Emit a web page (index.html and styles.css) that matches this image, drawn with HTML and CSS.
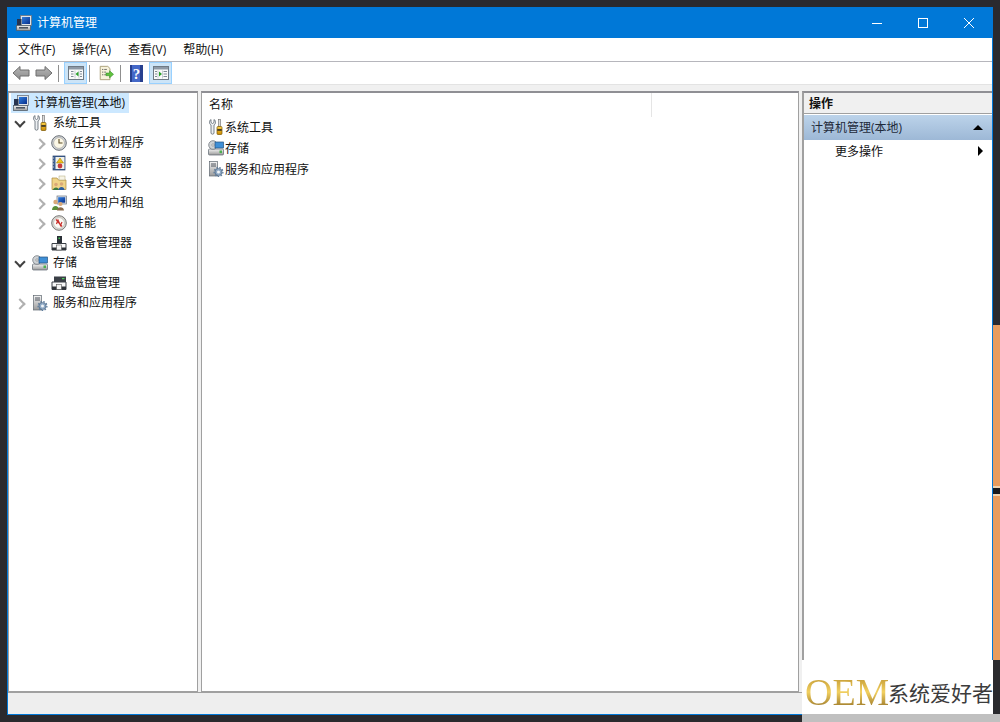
FILE: index.html
```html
<!DOCTYPE html>
<html lang="zh-CN">
<head>
<meta charset="utf-8">
<title>计算机管理</title>
<link rel="stylesheet" href="styles.css">
</head>
<body>
<svg class="defs" width="0" height="0" aria-hidden="true">
  <defs>
    <linearGradient id="screen" x1="0" y1="0" x2="1" y2="1"><stop offset="0" stop-color="#2f7fe0"/><stop offset="1" stop-color="#0a2f8a"/></linearGradient>
    <linearGradient id="metal" x1="0" y1="0" x2="0" y2="1"><stop offset="0" stop-color="#f4f4f4"/><stop offset="1" stop-color="#9a9a9a"/></linearGradient>
    <linearGradient id="gold" x1="0" y1="0" x2="0" y2="1"><stop offset="0" stop-color="#ffd34a"/><stop offset="1" stop-color="#c98a00"/></linearGradient>
    <linearGradient id="arrow" x1="0" y1="0" x2="0" y2="1"><stop offset="0" stop-color="#b5b5b5"/><stop offset="1" stop-color="#8e8e8e"/></linearGradient>
    <symbol id="i-computer" viewBox="0 0 16 16">
      <rect x="4.5" y="0.5" width="11" height="10" fill="#dfe4ea" stroke="#6d7580" stroke-width=".8"/>
      <rect x="6" y="2" width="8" height="7" fill="url(#screen)"/>
      <rect x="1" y="4" width="4.5" height="8" fill="#27344f"/>
      <rect x="0.5" y="10.5" width="14" height="5" fill="url(#metal)" stroke="#55606b" stroke-width=".8"/>
      <rect x="3" y="12" width="9" height="1.6" fill="#4a5460"/>
    </symbol>
    <symbol id="i-tools" viewBox="0 0 16 16">
      <path d="M3 0.5 C1 1.5 1 5 3 6 L3 14 C3 15.6 6 15.6 6 14 L6 6 C8 5 8 1.5 6 0.5 L6 3.5 L4.5 4.5 L3 3.5 Z" fill="#eceff2" stroke="#5c6670" stroke-width=".8"/>
      <rect x="10.5" y="0.5" width="2" height="7" fill="#dcdcdc" stroke="#6a6a6a" stroke-width=".6"/>
      <rect x="9" y="7.5" width="5" height="8" rx="1" fill="url(#gold)" stroke="#7a5600" stroke-width=".7"/>
      <rect x="9.3" y="10.2" width="4.4" height="1.5" fill="#222"/>
    </symbol>
    <symbol id="i-clock" viewBox="0 0 16 16">
      <circle cx="8" cy="8" r="7.3" fill="#d2d5d8" stroke="#6b7075"/>
      <circle cx="8" cy="8" r="5.4" fill="#fbf7e6" stroke="#9a9a9a" stroke-width=".6"/>
      <path d="M8 4 V8 H11.5" fill="none" stroke="#5b4a20" stroke-width="1.1"/>
    </symbol>
    <symbol id="i-event" viewBox="0 0 16 16">
      <rect x="2" y="1" width="12" height="14" fill="#3d5f93" stroke="#27406a" stroke-width=".7"/>
      <rect x="4.5" y="2" width="9" height="12" fill="#f1f1ea"/>
      <path d="M9 3 L12.5 8 H5.5 Z" fill="#f3c41a" stroke="#8a6c00" stroke-width=".5"/>
      <circle cx="9" cy="11" r="2.4" fill="#c83c3c"/>
      <path d="M1.5 3 H3 M1.5 6 H3 M1.5 9 H3 M1.5 12 H3" stroke="#ddd" stroke-width=".9"/>
    </symbol>
    <symbol id="i-share" viewBox="0 0 16 16">
      <path d="M1 3 H6 L7.5 5 H15 V14.5 H1 Z" fill="#f0d488" stroke="#a9893f" stroke-width=".7"/>
      <rect x="8" y="1" width="6" height="4" fill="#f7f4e6" stroke="#b0a77a" stroke-width=".5"/>
      <circle cx="5" cy="9.5" r="1.8" fill="#d9a878"/><path d="M2 15 C2 11.5 8 11.5 8 15 Z" fill="#3d7a3d"/>
      <circle cx="10.5" cy="9" r="1.8" fill="#d9a878"/><path d="M7.5 15 C7.5 11 13.5 11 13.5 15 Z" fill="#2d5f9e"/>
    </symbol>
    <symbol id="i-users" viewBox="0 0 16 16">
      <rect x="6" y="1" width="9.5" height="8" fill="#dfe4ea" stroke="#6d7580" stroke-width=".7"/>
      <rect x="7.2" y="2.2" width="7" height="5.5" fill="url(#screen)"/>
      <circle cx="4.5" cy="7" r="2.2" fill="#d9a878"/><path d="M1 15 C1 9.5 8 9.5 8 15 Z" fill="#5b8f3a"/>
      <circle cx="9.5" cy="9" r="2.1" fill="#d9a878"/><path d="M6 15.5 C6 11 13 11 13 15.5 Z" fill="#8a6a4a"/>
    </symbol>
    <symbol id="i-perf" viewBox="0 0 16 16">
      <circle cx="8" cy="8" r="7.3" fill="#dcdad2" stroke="#777"/>
      <circle cx="8" cy="8" r="5.4" fill="#fbfbf6" stroke="#a5a5a5" stroke-width=".5"/>
      <path d="M5 4.5 L11 11.5 M5.5 9 L7 5 L9.5 10.5 L11 7" fill="none" stroke="#c9302c" stroke-width="1.2"/>
    </symbol>
    <symbol id="i-device" viewBox="0 0 16 16">
      <rect x="6" y="1" width="5" height="7" fill="#2a2f36"/>
      <rect x="7.5" y="2.5" width="1.4" height="1.6" fill="#4bd05a"/>
      <path d="M1 8.5 H15 V15 H1 Z" fill="#fbfbfb" stroke="#3a3f46"/>
      <rect x="1" y="12.5" width="14" height="2.5" fill="#2e3339"/>
      <rect x="5.5" y="10" width="5" height="5" fill="#f5f5f5" stroke="#555" stroke-width=".6"/>
    </symbol>
    <symbol id="i-storage" viewBox="0 0 16 16">
      <rect x="0.5" y="9" width="15" height="6" rx="1" fill="url(#metal)" stroke="#5c6670" stroke-width=".7"/>
      <rect x="11.5" y="10.5" width="2.5" height="2.6" fill="#4bb04f"/>
      <circle cx="5" cy="5" r="4.3" fill="#cfd3d6" stroke="#666c72" stroke-width=".7"/>
      <circle cx="5" cy="5" r="1.2" fill="#f5f5f5" stroke="#666" stroke-width=".5"/>
      <rect x="7" y="2" width="8.5" height="6" fill="#3f8fd6" stroke="#25527f" stroke-width=".7"/>
    </symbol>
    <symbol id="i-disk" viewBox="0 0 16 16">
      <rect x="3" y="1.5" width="12" height="6" fill="#3a3f46"/>
      <rect x="11" y="3" width="2.5" height="1.2" fill="#4bd05a"/>
      <path d="M1 7 H15 V14.5 H1 Z" fill="#f8f8f8" stroke="#3a3f46"/>
      <rect x="1" y="11.5" width="14" height="3" fill="#2e3339"/>
      <rect x="5.5" y="9.5" width="5" height="5" fill="#f5f5f5" stroke="#555" stroke-width=".6"/>
    </symbol>
    <symbol id="i-services" viewBox="0 0 16 16">
      <rect x="1.5" y="0.5" width="8" height="14.5" fill="url(#metal)" stroke="#5f6770" stroke-width=".7"/>
      <path d="M3 3 H8 M3 5 H8" stroke="#3f4650" stroke-width=".9"/>
      <circle cx="10.5" cy="11" r="3.6" fill="#8fa9c4" stroke="#3d5673" stroke-width=".6"/>
      <circle cx="10.5" cy="11" r="4.4" fill="none" stroke="#5f7d9c" stroke-width="1.3" stroke-dasharray="1.6 1.4"/>
      <circle cx="10.5" cy="11" r="1.5" fill="#f1f4f7"/>
    </symbol>
    <symbol id="i-back" viewBox="0 0 18 16">
      <path d="M1 8 L8 1.5 V5 H17 V11 H8 V14.5 Z" fill="url(#arrow)" stroke="#6f6f6f"/>
    </symbol>
    <symbol id="i-forward" viewBox="0 0 18 16">
      <path d="M17 8 L10 1.5 V5 H1 V11 H10 V14.5 Z" fill="url(#arrow)" stroke="#6f6f6f"/>
    </symbol>
    <symbol id="i-pane-left" viewBox="0 0 16 16">
      <rect x="0.5" y="1.5" width="15" height="13" fill="#fafafa" stroke="#6f7a85"/>
      <rect x="1" y="2" width="14" height="2.5" fill="#8e99a6"/>
      <path d="M3 6.5 H5.5 M3 9 H5.5 M3 11.5 H5.5 M12 6.5 H14 M12 9 H14 M12 11.5 H14" stroke="#7f8b96"/>
      <path d="M7 5.5 V13.5 M11 5.5 V13.5" stroke="#b5bcc4" stroke-width=".7"/>
      <path d="M10.5 6.5 V11.5 L7.5 9 Z" fill="#2aa02a"/>
    </symbol>
    <symbol id="i-pane-right" viewBox="0 0 16 16">
      <rect x="0.5" y="1.5" width="15" height="13" fill="#fafafa" stroke="#6f7a85"/>
      <rect x="1" y="2" width="14" height="2.5" fill="#8e99a6"/>
      <path d="M2 6.5 H4 M2 9 H4 M2 11.5 H4 M10.5 6.5 H14 M10.5 9 H14 M10.5 11.5 H14" stroke="#7f8b96"/>
      <path d="M5 5.5 V13.5 M9.5 5.5 V13.5" stroke="#b5bcc4" stroke-width=".7"/>
      <path d="M6 6.5 V11.5 L9 9 Z" fill="#2aa02a"/>
    </symbol>
    <symbol id="i-export" viewBox="0 0 18 18">
      <path d="M2.5 1.5 H11 L13.5 4 V16.5 H2.5 Z" fill="#f8f3dc" stroke="#a59a72"/>
      <path d="M4.5 5 H6 M7 5 H10 M4.5 8 H6 M7 8 H9 M4.5 11 H6 M7 11 H9" stroke="#555" stroke-width=".9"/>
      <path d="M9 9 H13 V6.5 L17.5 10.5 L13 14.5 V12 H9 Z" fill="#62c23f" stroke="#2f8a2a" stroke-width=".6"/>
    </symbol>
    <symbol id="i-help" viewBox="0 0 13 17">
      <rect x="0" y="0" width="13" height="17" fill="#27408f"/>
      <rect x="2" y="0" width="8" height="17" fill="#4468c8"/>
      <text x="6.5" y="13.5" text-anchor="middle" class="help-mark">?</text>
    </symbol>
  </defs>
</svg>

<div class="desktop-strip"></div>

<div class="window">
  <header class="titlebar">
    <svg class="title-icon"><use href="#i-computer"/></svg>
    <span class="title-text">计算机管理</span>
    <div class="caption">
      <span class="cap-btn"><svg width="12" height="12" viewBox="0 0 12 12"><path d="M1 6.5 H11" stroke="#fff" fill="none"/></svg></span>
      <span class="cap-btn"><svg width="12" height="12" viewBox="0 0 12 12"><rect x="1.5" y="1.5" width="9" height="9" stroke="#fff" fill="none"/></svg></span>
      <span class="cap-btn"><svg width="12" height="12" viewBox="0 0 12 12"><path d="M1 1 L11 11 M11 1 L1 11" stroke="#fff" fill="none"/></svg></span>
    </div>
  </header>

  <nav class="menubar">
    <span class="menu-item">文件(F)</span>
    <span class="menu-item">操作(A)</span>
    <span class="menu-item">查看(V)</span>
    <span class="menu-item">帮助(H)</span>
  </nav>

  <div class="toolbar">
    <span class="tool"><svg class="ico18"><use href="#i-back"/></svg></span>
    <span class="tool"><svg class="ico18"><use href="#i-forward"/></svg></span>
    <span class="tsep sep-a"></span>
    <span class="tool on"><svg class="ico16"><use href="#i-pane-left"/></svg></span>
    <span class="tsep sep-b"></span>
    <span class="tool"><svg class="ico18"><use href="#i-export"/></svg></span>
    <span class="tsep sep-c"></span>
    <span class="tool"><svg class="ico-help"><use href="#i-help"/></svg></span>
    <span class="tool on after-help"><svg class="ico16"><use href="#i-pane-right"/></svg></span>
  </div>

  <main class="panes">
    <section class="pane tree">
      <div class="row root"><span class="sel"><svg class="ico16"><use href="#i-computer"/></svg><span class="lbl">计算机管理(本地)</span></span></div>
      <div class="row l1"><span class="chev down"></span><svg class="ico16"><use href="#i-tools"/></svg><span class="lbl">系统工具</span></div>
      <div class="row l2"><span class="chev right"></span><svg class="ico16"><use href="#i-clock"/></svg><span class="lbl">任务计划程序</span></div>
      <div class="row l2"><span class="chev right"></span><svg class="ico16"><use href="#i-event"/></svg><span class="lbl">事件查看器</span></div>
      <div class="row l2"><span class="chev right"></span><svg class="ico16"><use href="#i-share"/></svg><span class="lbl">共享文件夹</span></div>
      <div class="row l2"><span class="chev right"></span><svg class="ico16"><use href="#i-users"/></svg><span class="lbl">本地用户和组</span></div>
      <div class="row l2"><span class="chev right"></span><svg class="ico16"><use href="#i-perf"/></svg><span class="lbl">性能</span></div>
      <div class="row l2"><span class="chev none"></span><svg class="ico16"><use href="#i-device"/></svg><span class="lbl">设备管理器</span></div>
      <div class="row l1"><span class="chev down"></span><svg class="ico16"><use href="#i-storage"/></svg><span class="lbl">存储</span></div>
      <div class="row l2"><span class="chev none"></span><svg class="ico16"><use href="#i-disk"/></svg><span class="lbl">磁盘管理</span></div>
      <div class="row l1"><span class="chev right"></span><svg class="ico16"><use href="#i-services"/></svg><span class="lbl">服务和应用程序</span></div>
    </section>

    <section class="pane list">
      <div class="list-head"><span class="col-name">名称</span><span class="col-rest"></span></div>
      <div class="list-row"><svg class="ico16"><use href="#i-tools"/></svg><span>系统工具</span></div>
      <div class="list-row"><svg class="ico16"><use href="#i-storage"/></svg><span>存储</span></div>
      <div class="list-row"><svg class="ico16"><use href="#i-services"/></svg><span>服务和应用程序</span></div>
    </section>

    <section class="pane actions">
      <div class="act-head">操作</div>
      <div class="act-group"><span class="act-title">计算机管理(本地)</span><span class="tri-up"></span></div>
      <div class="act-item"><span>更多操作</span><span class="tri-right"></span></div>
    </section>
  </main>

  <footer class="statusbar"></footer>
</div>

<div class="watermark"><span class="wm-oem">OEM</span><span class="wm-cn">系统爱好者</span></div>
<div class="wm-band"></div>
</body>
</html>
```

FILE: styles.css
```css
* { box-sizing: border-box; }
html, body { margin: 0; height: 100%; }
body {
  background: #2a2a2e;
  font-family: "Open Sans", "Noto Sans CJK SC", sans-serif;
  font-size: 12px;
  color: #111;
  overflow: hidden;
  padding: 7px 0 0 7px;
}
.defs { display: block; height: 0; }
.desktop-strip {
  position: absolute;
  left: 992px; top: 325px;
  width: 8px; height: 335px;
  background: linear-gradient(#e79c5e 0 161px, #efd3b0 161px 163px, #1a1a1c 163px 169px, #efd3b0 169px 171px, #e79c5e 171px);
}
.window {
  position: relative;
  width: 986px;
  height: 708px;
  border: 1px solid #0078d7;
  background: #f0f0f0;
  display: flex;
  flex-direction: column;
}
.titlebar {
  height: 30px;
  background: #0078d7;
  color: #fff;
  display: flex;
  align-items: center;
  padding-left: 8px;
  flex: none;
}
.title-icon { width: 16px; height: 16px; margin-right: 5px; }
.title-text { font-size: 12px; padding-bottom: 2px; }
.caption { margin-left: auto; display: flex; }
.cap-btn {
  width: 46px; height: 30px;
  display: flex; align-items: center; justify-content: center;
}
.menubar {
  height: 24px;
  background: #fff;
  border-bottom: 1px solid #b6b6bc;
  display: flex;
  align-items: center;
  padding-left: 10px;
  gap: 17px;
  flex: none;
}
.menu-item { padding-bottom: 2px; }
.toolbar {
  height: 23px;
  background: #fff;
  border-bottom: 1px solid #e3e3e3;
  display: flex;
  align-items: center;
  padding-left: 1px;
  flex: none;
}
.tool {
  width: 23px; height: 22px;
  display: flex; align-items: center; justify-content: center;
}
.tool.on { background: #cce4f7; border: 1px solid #99d1ff; }
.tsep { width: 1px; height: 17px; background: #8f8f8f; }
.sep-a { margin: 0 5px 0 3px; }
.sep-b { margin: 0 4px 0 2px; }
.sep-c { margin: 0 4px 0 3px; }
.after-help { margin-left: 1px; }
.ico16 { width: 16px; height: 16px; flex: none; display: block; }
.ico18 { width: 18px; height: 16px; flex: none; display: block; }
.ico-help { width: 13px; height: 17px; flex: none; display: block; }
.help-mark { font-family: "Liberation Serif", serif; font-size: 15px; font-weight: bold; fill: #fff; }

.panes {
  flex: 1;
  min-height: 0;
  display: flex;
  gap: 3px;
  padding-top: 6px;
}
.pane {
  background: #fff;
  border: 1px solid #a0a0a0;
  border-top: 2px solid #8f8f94;
}
.tree { width: 190px; padding-left: 2px; flex: none; }
.list { width: 598px; flex: none; }
.actions { flex: 1; border-left-width: 2px; border-right: 0; }

.row { height: 20px; display: flex; align-items: center; white-space: nowrap; }
.sel { background: #cce8ff; display: flex; align-items: center; height: 20px; padding-left: 2px; padding-right: 4px; }
.l1 { padding-left: 5px; }
.l2 { padding-left: 24px; }
.lbl { margin-left: 5px; padding-bottom: 3px; }
.chev { width: 13px; height: 12px; flex: none; margin-right: 3px; display: block; position: relative; }
.l2 .chev { width: 12px; margin-right: 4px; }
.chev.right::before, .chev.down::before {
  content: ""; position: absolute;
  width: 6px; height: 6px;
  border-right: 2px solid #b0b0b0; border-bottom: 2px solid #b0b0b0;
}
.chev.right::before { left: 0; top: 3px; transform: rotate(-45deg); }
.l2 .chev.right::before { left: 1px; }
.chev.down::before { left: 0; top: 1px; transform: rotate(45deg); border-color: #404040; }

.list-head { height: 23px; display: flex; align-items: flex-start; }
.col-name { width: 450px; height: 24px; padding-left: 7px; line-height: 24px; border-right: 1px solid #e5e5e5; }
.list-row { height: 21px; display: flex; align-items: center; padding-left: 6px; gap: 1px; white-space: nowrap; }

.act-head { height: 21px; padding-left: 5px; line-height: 21px; font-weight: 700; background: #f0f0f0; border-bottom: 1px solid #a0a0a0; }
.act-group {
  height: 25px; margin-top: 1px;
  display: flex; align-items: center; justify-content: space-between;
  padding: 0 9px 0 7px;
  background: linear-gradient(#bcd3ea, #9db8d6);
  color: #1f2a3a;
}
.act-title { padding-bottom: 2px; }
.tri-up { width: 0; height: 0; border-left: 5px solid transparent; border-right: 5px solid transparent; border-bottom: 5px solid #000; }
.act-item { height: 22px; display: flex; align-items: center; justify-content: space-between; padding: 0 9px 0 31px; }
.tri-right { width: 0; height: 0; border-top: 5px solid transparent; border-bottom: 5px solid transparent; border-left: 5px solid #000; }

.statusbar { height: 22px; background: #eeeeee; border-top: 1px solid #a0a0a0; flex: none; }

.watermark {
  position: absolute;
  left: 802px; top: 660px;
  width: 191px; height: 54px;
  background: #fff;
  display: flex;
  align-items: flex-start;
  padding: 14px 0 0 3px;
}
.wm-band {
  position: absolute;
  left: 802px; top: 714px;
  width: 198px; height: 8px;
  background: #c0c0c0;
}
.wm-oem {
  width: 83px;
  flex: none;
  font-family: "Liberation Serif", serif;
  font-size: 38px;
  line-height: 36px;
  background: linear-gradient(#b98f2c, #f2d060 50%, #8f6c22);
  -webkit-background-clip: text;
  background-clip: text;
  color: transparent;
}
.wm-cn {
  font-family: "Noto Sans CJK SC", sans-serif;
  font-size: 21px;
  line-height: 36px;
  color: #3c3c3c;
  white-space: nowrap;
}
```
